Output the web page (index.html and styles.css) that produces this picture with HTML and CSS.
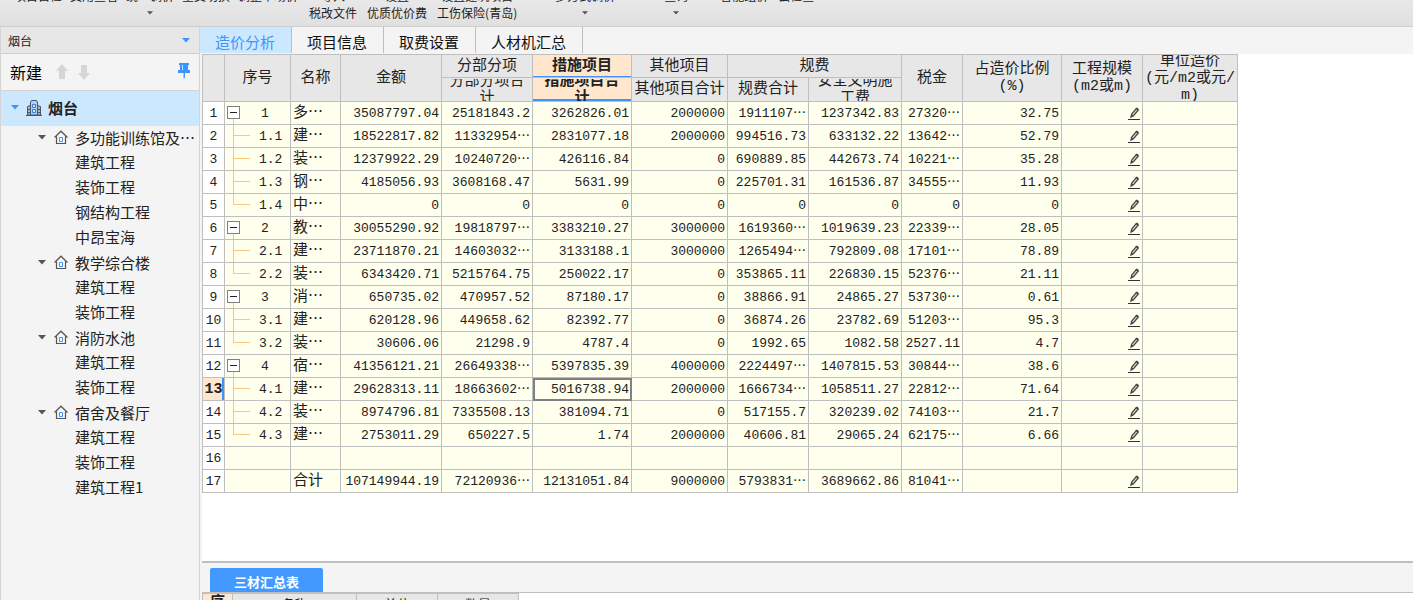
FILE: index.html
```html
<!DOCTYPE html>
<html lang="zh-CN">
<head>
<meta charset="utf-8">
<title>造价分析</title>
<link rel="stylesheet" href="styles.css">
</head>
<body>
<svg class="defs" aria-hidden="true">
  <symbol id="pen" viewBox="0 0 12 13"><path d="M0 12.5h12" stroke="#333" stroke-width="1"/><path d="M3 10l.7-3L8.300 1.500l2 1.500L5.500 8.700z" fill="#d8d8d0" stroke="#444" stroke-width="1.200"/><path d="M3 10l.7-2.500 1.600 1.200zM7.500 1.800l1.300-1.300 2 1.600-1 1.300z" fill="#444"/></symbol>
  <symbol id="home" viewBox="0 0 14 14"><path d="M.5 7.500L7 1.200l6.500 6.300M2.500 6.500v7h9v-7" fill="none" stroke="#555" stroke-width="1.200"/><path d="M5.500 7.500h3v4h-3z" fill="#fff" stroke="#3d94ff"/></symbol>
  <symbol id="caret" viewBox="0 0 8 5"><path d="M0 0h8L4 4.500z" fill="currentColor"/></symbol>
</svg>
<header class="ribbon">
  <div class="group">
    <button><span>项目自检</span><span></span></button>
    <button><span>费用查看</span><span></span></button>
    <button><span>统一调价</span><svg class="drop"><use href="#caret"/></svg></button>
    <button><span>全费切换</span><span></span></button>
    <button><span>调整市场价</span><span></span></button>
  </div>
  <div class="group wide">
    <button><span>导入</span><span>税改文件</span></button>
    <button><span>设置</span><span>优质优价费</span></button>
    <button><span>设置建筑项目</span><span>工伤保险(青岛)</span></button>
  </div>
  <div class="group apart"><button><span>多方式调价</span><svg class="drop"><use href="#caret"/></svg></button></div>
  <div class="group query"><button><span>查询</span><svg class="drop"><use href="#caret"/></svg></button></div>
  <div class="group wide last">
    <button><span>智能组价</span><span></span></button>
    <button><span>云检查</span><span></span></button>
  </div>
</header>
<div class="workspace">
  <aside class="sidebar">
    <div class="picker">
      <select aria-label="项目"><option>烟台</option></select>
      <svg class="picker-arrow"><use href="#caret"/></svg>
    </div>
    <div class="tools">
      <button class="new">新建</button>
      <button aria-label="上移"><svg width="12" height="16" viewBox="0 0 12 16"><path d="M6 0l6 7H9v8H3V7H0z" fill="#d6d6d6"/></svg></button>
      <button aria-label="下移"><svg width="12" height="16" viewBox="0 0 12 16"><path d="M6 16l6-7H9V1H3v8H0z" fill="#d6d6d6"/></svg></button>
      <button class="pin" aria-label="固定"><svg width="12" height="16" viewBox="0 0 12 16"><path d="M1 0h10v2H10v5h2v3H7v4l-1 2-.5-2v-4H0V7h2V2H1z" fill="#3d94ff"/><path d="M4.500 2v5" stroke="#bcdcff"/></svg></button>
    </div>
    <div class="root">
      <button class="toggle" aria-label="折叠"><svg><use href="#caret"/></svg></button>
      <svg width="16" height="16" viewBox="0 0 16 16"><path d="M4.500 15V2l1-1.500h5l1 1.500v13z" fill="#b9cbe6" stroke="#4a5568"/><path d="M1.500 15V6.500l3-1V15zM11.500 5.500l3 1V15h-3z" fill="#a9b4c6" stroke="#4a5568"/><path d="M6.500 4.500h3v3h-3zM6.500 9.500h3v3h-3z" fill="#cfe6ff" stroke="#2f7fe6"/><path d="M0 15.500h16" stroke="#4a5568"/><path d="M2 9.500h2M2 12.500h2M12 9.500h2M12 12.500h2" stroke="#4a5568"/></svg>
      <span>烟台</span>
    </div>
    <ul class="tree">
      <li><div class="node"><button class="toggle" aria-label="折叠"><svg><use href="#caret"/></svg></button><svg class="home"><use href="#home"/></svg><span>多功能训练馆及⋯</span></div>
        <ul><li>建筑工程</li><li>装饰工程</li><li>钢结构工程</li><li>中昂宝海</li></ul></li>
      <li><div class="node"><button class="toggle" aria-label="折叠"><svg><use href="#caret"/></svg></button><svg class="home"><use href="#home"/></svg><span>教学综合楼</span></div>
        <ul><li>建筑工程</li><li>装饰工程</li></ul></li>
      <li><div class="node"><button class="toggle" aria-label="折叠"><svg><use href="#caret"/></svg></button><svg class="home"><use href="#home"/></svg><span>消防水池</span></div>
        <ul><li>建筑工程</li><li>装饰工程</li></ul></li>
      <li><div class="node"><button class="toggle" aria-label="折叠"><svg><use href="#caret"/></svg></button><svg class="home"><use href="#home"/></svg><span>宿舍及餐厅</span></div>
        <ul><li>建筑工程</li><li>装饰工程</li><li>建筑工程1</li></ul></li>
    </ul>
  </aside>
  <main class="main">
    <nav class="tabs">
      <button class="active">造价分析</button><button>项目信息</button><button>取费设置</button><button>人材机汇总</button>
    </nav>
    <section class="sheet">
      <table class="grid">
        <colgroup><col class="c-no"><col class="c-seq"><col class="c-name"><col class="c-sum"><col class="c-part"><col class="c-step"><col class="c-other"><col class="c-fee"><col class="c-safe"><col class="c-tax"><col class="c-rate"><col class="c-scale"><col class="c-unit"></colgroup>
        <thead>
          <tr class="h1"><th rowspan="2"></th><th rowspan="2"><div>序号</div></th><th rowspan="2"><div>名称</div></th><th rowspan="2"><div>金额</div></th><th><div>分部分项</div></th><th class="hot"><div>措施项目</div></th><th><div>其他项目</div></th><th colspan="2"><div>规费</div></th><th rowspan="2"><div>税金</div></th><th rowspan="2"><div>占造价比例<br>(%)</div></th><th rowspan="2"><div>工程规模<br>(m2或m)</div></th><th rowspan="2"><div>单位造价<br>(元/m2或元/<br>m)</div></th></tr>
          <tr class="h2"><th><div>分部分项合<br>计</div></th><th class="hot under"><div>措施项目合<br>计</div></th><th><div>其他项目合计</div></th><th><div>规费合计</div></th><th><div>安全文明施<br>工费</div></th></tr>
        </thead>
        <tbody>
          <tr><th>1</th><td class="top"><button aria-label="折叠"></button>1</td><td>多⋯</td><td>35087797.04</td><td>25181843.2</td><td>3262826.01</td><td>2000000</td><td>1911107⋯</td><td>1237342.83</td><td>27320⋯</td><td>32.75</td><td><svg class="pen"><use href="#pen"/></svg></td><td></td></tr>
          <tr><th>2</th><td class="sub">1.1</td><td>建⋯</td><td>18522817.82</td><td>11332954⋯</td><td>2831077.18</td><td>2000000</td><td>994516.73</td><td>633132.22</td><td>13642⋯</td><td>52.79</td><td><svg class="pen"><use href="#pen"/></svg></td><td></td></tr>
          <tr><th>3</th><td class="sub">1.2</td><td>装⋯</td><td>12379922.29</td><td>10240720⋯</td><td>426116.84</td><td>0</td><td>690889.85</td><td>442673.74</td><td>10221⋯</td><td>35.28</td><td><svg class="pen"><use href="#pen"/></svg></td><td></td></tr>
          <tr><th>4</th><td class="sub">1.3</td><td>钢⋯</td><td>4185056.93</td><td>3608168.47</td><td>5631.99</td><td>0</td><td>225701.31</td><td>161536.87</td><td>34555⋯</td><td>11.93</td><td><svg class="pen"><use href="#pen"/></svg></td><td></td></tr>
          <tr><th>5</th><td class="sub end">1.4</td><td>中⋯</td><td>0</td><td>0</td><td>0</td><td>0</td><td>0</td><td>0</td><td>0</td><td>0</td><td><svg class="pen"><use href="#pen"/></svg></td><td></td></tr>
          <tr><th>6</th><td class="top"><button aria-label="折叠"></button>2</td><td>教⋯</td><td>30055290.92</td><td>19818797⋯</td><td>3383210.27</td><td>3000000</td><td>1619360⋯</td><td>1019639.23</td><td>22339⋯</td><td>28.05</td><td><svg class="pen"><use href="#pen"/></svg></td><td></td></tr>
          <tr><th>7</th><td class="sub">2.1</td><td>建⋯</td><td>23711870.21</td><td>14603032⋯</td><td>3133188.1</td><td>3000000</td><td>1265494⋯</td><td>792809.08</td><td>17101⋯</td><td>78.89</td><td><svg class="pen"><use href="#pen"/></svg></td><td></td></tr>
          <tr><th>8</th><td class="sub end">2.2</td><td>装⋯</td><td>6343420.71</td><td>5215764.75</td><td>250022.17</td><td>0</td><td>353865.11</td><td>226830.15</td><td>52376⋯</td><td>21.11</td><td><svg class="pen"><use href="#pen"/></svg></td><td></td></tr>
          <tr><th>9</th><td class="top"><button aria-label="折叠"></button>3</td><td>消⋯</td><td>650735.02</td><td>470957.52</td><td>87180.17</td><td>0</td><td>38866.91</td><td>24865.27</td><td>53730⋯</td><td>0.61</td><td><svg class="pen"><use href="#pen"/></svg></td><td></td></tr>
          <tr><th>10</th><td class="sub">3.1</td><td>建⋯</td><td>620128.96</td><td>449658.62</td><td>82392.77</td><td>0</td><td>36874.26</td><td>23782.69</td><td>51203⋯</td><td>95.3</td><td><svg class="pen"><use href="#pen"/></svg></td><td></td></tr>
          <tr><th>11</th><td class="sub end">3.2</td><td>装⋯</td><td>30606.06</td><td>21298.9</td><td>4787.4</td><td>0</td><td>1992.65</td><td>1082.58</td><td>2527.11</td><td>4.7</td><td><svg class="pen"><use href="#pen"/></svg></td><td></td></tr>
          <tr><th>12</th><td class="top"><button aria-label="折叠"></button>4</td><td>宿⋯</td><td>41356121.21</td><td>26649338⋯</td><td>5397835.39</td><td>4000000</td><td>2224497⋯</td><td>1407815.53</td><td>30844⋯</td><td>38.6</td><td><svg class="pen"><use href="#pen"/></svg></td><td></td></tr>
          <tr><th class="current">13</th><td class="sub">4.1</td><td>建⋯</td><td>29628313.11</td><td>18663602⋯</td><td class="focus">5016738.94</td><td>2000000</td><td>1666734⋯</td><td>1058511.27</td><td>22812⋯</td><td>71.64</td><td><svg class="pen"><use href="#pen"/></svg></td><td></td></tr>
          <tr><th>14</th><td class="sub">4.2</td><td>装⋯</td><td>8974796.81</td><td>7335508.13</td><td>381094.71</td><td>0</td><td>517155.7</td><td>320239.02</td><td>74103⋯</td><td>21.7</td><td><svg class="pen"><use href="#pen"/></svg></td><td></td></tr>
          <tr><th>15</th><td class="sub end">4.3</td><td>建⋯</td><td>2753011.29</td><td>650227.5</td><td>1.74</td><td>2000000</td><td>40606.81</td><td>29065.24</td><td>62175⋯</td><td>6.66</td><td><svg class="pen"><use href="#pen"/></svg></td><td></td></tr>
          <tr><th>16</th><td></td><td></td><td></td><td></td><td></td><td></td><td></td><td></td><td></td><td></td><td></td><td></td></tr>
          <tr><th>17</th><td></td><td>合计</td><td>107149944.19</td><td>72120936⋯</td><td>12131051.84</td><td>9000000</td><td>5793831⋯</td><td>3689662.86</td><td>81041⋯</td><td></td><td><svg class="pen"><use href="#pen"/></svg></td><td></td></tr>
        </tbody>
      </table>
    </section>
    <section class="panel">
      <div class="panel-tabs"><button>三材汇总表</button></div>
      <div class="panel-body">
        <table class="summary">
          <colgroup><col class="s-no"><col class="s-name"><col class="s-unit"><col class="s-unit"></colgroup>
          <thead><tr><th class="hot">序<br>号</th><th>名称</th><th>单位</th><th>数量</th></tr></thead>
        </table>
      </div>
    </section>
  </main>
</div>
</body>
</html>
```
FILE: styles.css
```css
* { box-sizing: border-box; }
body {
  margin: 0;
  height: 100vh;
  display: flex;
  flex-direction: column;
  overflow: hidden;
  background: #f4f4f4;
  color: #222;
  font: 15px/17px "Noto Sans CJK SC", sans-serif;
}
button {
  margin: 0;
  padding: 0;
  border: 0;
  background: none;
  color: inherit;
  font: inherit;
}
ul { margin: 0; padding: 0; list-style: none; }
.defs { display: none; }

/* Ribbon */
.ribbon {
  flex: none;
  height: 27px;
  display: flex;
  align-items: flex-end;
  padding: 0 14px 5px;
  overflow: hidden;
  background: linear-gradient(#e8e8e8, #e0e0e0);
  border-bottom: 1px solid #cfcfcf;
}
.group { display: flex; gap: 8px; white-space: nowrap; }
.group.wide { gap: 10px; margin-left: 11px; }
.group.apart { margin-left: 38px; }
.group.query { margin-left: 49px; }
.group.last { margin-left: 32px; }
.ribbon button {
  display: flex;
  flex-direction: column;
  align-items: center;
  gap: 1px;
  font-size: 12px;
  line-height: 16px;
}
.ribbon button > * { height: 16px; }
.ribbon .drop { width: 6px; color: #555; }

/* Layout */
.workspace { flex: 1; min-height: 0; display: flex; }
.sidebar {
  flex: none;
  width: 200px;
  border: solid #d4d4d4;
  border-width: 0 1px;
}
.main {
  flex: 1;
  min-width: 0;
  display: flex;
  flex-direction: column;
}

/* Sidebar */
.picker {
  display: flex;
  align-items: center;
  height: 27px;
  padding-right: 9px;
  background: #e7e7e7;
  border-bottom: 1px solid #d0d0d0;
}
.picker select {
  flex: 1;
  appearance: none;
  border: 0;
  padding: 0 7px;
  background: none;
  color: #222;
  font: 12px/17px "Noto Sans CJK SC", sans-serif;
}
.picker-arrow { width: 8px; height: 5px; color: #3d94ff; }
.tools {
  display: flex;
  align-items: center;
  gap: 10px;
  height: 37px;
  padding: 0 9px;
  border-bottom: 1px solid #d4d4d4;
}
.tools button { line-height: 16px; }
.tools svg { display: block; }
.tools .new { font-size: 16px; padding-right: 4px; color: #000; }
.tools .pin { margin-left: auto; padding-bottom: 3px; }
.root {
  display: flex;
  align-items: center;
  height: 35px;
  padding: 0 0 2px 9px;
  background: #cce8ff;
  font-weight: 700;
}
.root > svg { margin: 0 6px 0 7px; }
.root .toggle { color: #3d94ff; }
.toggle { width: 9px; height: 17px; color: #555; }
.toggle svg { display: block; width: 8px; height: 5px; margin: auto; }
.tree li li { height: 25px; padding-left: 74px; line-height: 21px; }
.node { display: flex; align-items: center; height: 25px; padding: 0 0 3px 36px; white-space: nowrap; }
.home { width: 14px; height: 14px; margin: 0 7px 0 8px; }

/* Tabs */
.tabs {
  flex: none;
  display: flex;
  height: 27px;
  padding-bottom: 1px;
}
.tabs button {
  padding: 3px 16px 0 15px;
  border-right: 1px solid #bfbfbf;
  color: #111;
}
.tabs .active { background: #cce8ff; color: #3d94ff; }

/* Cost sheet */
.sheet {
  flex: 1;
  min-height: 0;
  margin-left: 2px;
  overflow: hidden;
  background: #fff;
}
table { border-collapse: collapse; table-layout: fixed; }
th, td { padding: 0; border: 1px solid #bfbfbf; }
.grid { width: 1036px; }
.c-no { width: 22px; }
.c-seq { width: 66px; }
.c-name { width: 50px; }
.c-sum { width: 101px; }
.c-part { width: 91px; }
.c-step { width: 99px; }
.c-other { width: 96px; }
.c-fee { width: 81px; }
.c-safe { width: 93px; }
.c-tax { width: 61px; }
.c-rate { width: 99px; }
.c-scale { width: 81px; }
.c-unit { width: 95px; }
thead th {
  background: #e7e7e7;
  font-weight: 400;
}
thead div {
  display: grid;
  align-content: center;
  height: 22px;
  overflow: hidden;
  white-space: nowrap;
  font-family: "Liberation Mono", "Noto Sans CJK SC", monospace;
}
thead [rowspan] div { height: 46px; }
.h1 { height: 23px; }
.h2 { height: 24px; }
thead .hot {
  background: #ffe6cc;
  font-weight: 700;
}
.grid .hot { box-shadow: inset 0 -1px #3d94ff; }
.grid .under { box-shadow: inset 0 -2px #3d94ff; }
tbody tr { height: 23px; }
tbody th, tbody td {
  overflow: hidden;
  white-space: nowrap;
  font-family: "Liberation Mono", "Noto Sans CJK SC", monospace;
  font-size: 13px;
  line-height: 17px;
}
tbody th { background: #fff; font-weight: 400; }
tbody td { background-color: #ffffee; text-align: right; padding-right: 2px; }
tbody td:nth-child(2) { text-align: left; }
tbody td:nth-child(3) { text-align: left; padding-left: 2px; font-size: 15px; }
tbody .current {
  background: #ffe6cc;
  box-shadow: inset -2px 0 #3d94ff;
  font-size: 15px;
  font-weight: 700;
}
tbody .focus { outline: 2px solid #808080; outline-offset: -2px; }
.pen { display: block; width: 12px; height: 13px; margin-left: auto; }

/* Outline lines in the sequence column */
tbody .sub {
  padding-left: 34px;
  background-image: linear-gradient(#ffc67a, #ffc67a), linear-gradient(#ffc67a, #ffc67a);
  background-repeat: no-repeat;
  background-position: 8px 0, 8px 10px;
  background-size: 1px 100%, 17px 1px;
}
tbody .end { background-size: 1px 10px, 17px 1px; }
tbody .top {
  background-image: linear-gradient(#ffc67a, #ffc67a);
  background-repeat: no-repeat;
  background-position: 8px 12px;
  background-size: 1px 12px;
}
.top button {
  width: 13px;
  height: 13px;
  margin: 0 21px 2px 2px;
  vertical-align: middle;
  border: 1px solid #808080;
  background: linear-gradient(#222, #222) center / 7px 1px no-repeat #fff;
}

/* Lower panel */
.panel {
  flex: none;
  height: 39px;
  margin-left: 2px;
  overflow: hidden;
  border-top: 2px solid #bfbfbf;
}
.panel-tabs {
  display: flex;
  height: 29px;
  padding: 5px 8px 0;
}
.panel-tabs button {
  padding: 2px 24px 0;
  border-radius: 2px 2px 0 0;
  background: #4499ff;
  color: #fff;
  font-size: 13px;
  font-weight: 700;
}
.panel-body { background: #fff; border-top: 1px solid #bfbfbf; }
.summary { width: 317px; }
.summary th { padding-top: 1px; vertical-align: top; font-size: 13px; line-height: 17px; }
.summary .hot { padding: 0; font-size: 15px; line-height: 14px; }
.s-no { width: 30px; }
.s-name { width: 124px; }
.s-unit { width: 81px; }
```
